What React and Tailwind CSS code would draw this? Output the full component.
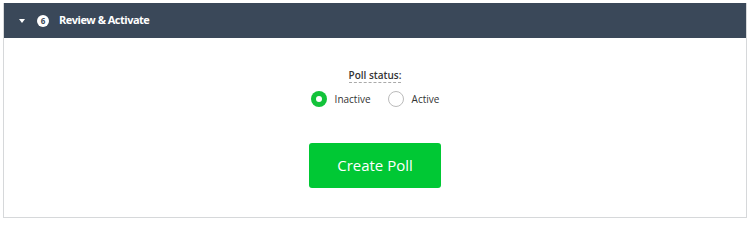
import React, { useState } from "react";

export default function App() {
  const [status, setStatus] = useState("inactive");

  return (
    <div className="bg-white w-[750px] h-[223px] pt-[3px] px-[3px]" style={{ fontFamily: '"Open Sans", sans-serif' }}>
      <div className="border border-[#d6d8da] border-t-0 bg-white">
        <div className="h-[35px] bg-[#3a4859] flex items-center pl-[15px] text-white">
          <svg width="6" height="4" viewBox="0 0 6 4" className="mr-[12px]">
            <path d="M0 0 L6 0 L3 4 Z" fill="#fff" />
          </svg>
          <span className="w-[12px] h-[12px] rounded-full bg-white text-[#3a4859] text-[8px] font-bold flex items-center justify-center leading-none">6</span>
          <span className="ml-[10px] text-[11px] font-bold tracking-[-0.5px]">Review &amp; Activate</span>
        </div>
        <div className="h-[179px] flex flex-col items-center pt-[31px]">
          <span className="text-[10px] font-semibold text-[#333] leading-[13px] border-b border-dashed border-[#aaa]">Poll status:</span>
          <div className="flex items-center mt-[8px] text-[10px] text-[#333]">
            <label className="flex items-center cursor-pointer" onClick={() => setStatus("inactive")}>
              <span className={status === "inactive" ? "w-[16px] h-[16px] rounded-full bg-[#13c33a] flex items-center justify-center" : "w-[16px] h-[16px] rounded-full border border-[#bbb]"}>
                {status === "inactive" && <span className="w-[6px] h-[6px] rounded-full bg-white" />}
              </span>
              <span className="ml-[8px]">Inactive</span>
            </label>
            <label className="flex items-center ml-[17px] cursor-pointer" onClick={() => setStatus("active")}>
              <span className={status === "active" ? "w-[16px] h-[16px] rounded-full bg-[#13c33a] flex items-center justify-center" : "w-[16px] h-[16px] rounded-full border border-[#bbb]"}>
                {status === "active" && <span className="w-[6px] h-[6px] rounded-full bg-white" />}
              </span>
              <span className="ml-[8px]">Active</span>
            </label>
          </div>
          <button className="mt-[36px] w-[132px] h-[45px] rounded-[3px] bg-[#00c834] text-white text-[15px]">Create Poll</button>
        </div>
      </div>
    </div>
  );
}
